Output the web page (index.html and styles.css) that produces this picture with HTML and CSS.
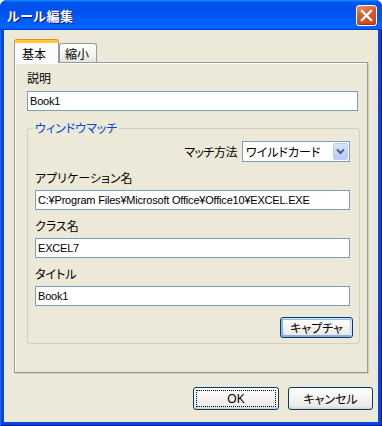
FILE: index.html
```html
<!DOCTYPE html>
<html lang="ja">
<head>
    <meta charset="UTF-8">
    <meta name="viewport" content="width=device-width, initial-scale=1.0">
    <title>ルール編集</title>
    <link rel="stylesheet" href="styles.css">
</head>
<body>
    <div class="window">
        <!-- Title bar -->
        <div class="titlebar">
            <span class="title">ルール編集</span>
            <button class="close-btn" aria-label="閉じる">
                <svg width="13" height="13" viewBox="0 0 13 13">
                    <path d="M2 2 L11 11 M11 2 L2 11" stroke="#fff" stroke-width="2.4" stroke-linecap="square"/>
                </svg>
            </button>
        </div>

        <div class="client">
            <!-- Tabs -->
            <div class="tabs">
                <div class="tab active">基本</div>
                <div class="tab">縮小</div>
            </div>

            <div class="panel">
                <div class="label">説明</div>
                <div class="input">Book1</div>

                <fieldset class="group">
                    <legend>ウィンドウマッチ</legend>

                    <div class="match-row">
                        <span class="label-inline">マッチ方法</span>
                        <div class="combo">
                            <span>ワイルドカード</span>
                            <span class="combo-btn">
                                <svg width="9" height="7" viewBox="0 0 9 7">
                                    <path d="M1 1.5 L4.5 5 L8 1.5" fill="none" stroke="#4d6185" stroke-width="2"/>
                                </svg>
                            </span>
                        </div>
                    </div>

                    <div class="label">アプリケーション名</div>
                    <div class="input">C:¥Program Files¥Microsoft Office¥Office10¥EXCEL.EXE</div>

                    <div class="label">クラス名</div>
                    <div class="input">EXCEL7</div>

                    <div class="label">タイトル</div>
                    <div class="input">Book1</div>

                    <div class="capture-row">
                        <button class="btn btn-hot">キャプチャ</button>
                    </div>
                </fieldset>
            </div>

            <!-- Dialog buttons -->
            <div class="actions">
                <button class="btn btn-ok"><span class="focus">OK</span></button>
                <button class="btn btn-cancel">キャンセル</button>
            </div>
        </div>
    </div>
</body>
</html>
```

FILE: styles.css
```css
/* General Styles */

body {
    margin: 0;
    background: #fff;
    font-family: "Liberation Sans", "Noto Sans CJK JP", sans-serif;
    font-size: 12px;
    color: #000;
    font-feature-settings: "palt";
}

.window {
    width: 382px;
    height: 426px;
    display: flex;
    flex-direction: column;
    background: #0846dc;
    border-radius: 7px 7px 0 0;
    overflow: hidden;
    box-shadow: inset 1px 0 #166aee, inset -1px 0 #00138c, inset 0 -1px #00138c;
}

/* Title bar */
.titlebar {
    height: 30px;
    flex-shrink: 0;
    display: flex;
    align-items: center;
    justify-content: space-between;
    padding: 0 5px 0 7px;
    background: linear-gradient(180deg, #0997ff, #0053ee 8%, #0050ee 40%, #0066ff 88%, #0066ff 93%, #005bff 95%, #003dd7 96%, #003dd7);
}

.title {
    color: #fff;
    font-family: "Noto Sans CJK JP", sans-serif;
    font-weight: bold;
    font-size: 13px;
    letter-spacing: 0.5px;
    text-shadow: 1px 1px #0f1089;
}

.close-btn {
    width: 21px;
    height: 21px;
    padding: 0;
    display: flex;
    align-items: center;
    justify-content: center;
    border: 1px solid #fff;
    border-radius: 3px;
    background: linear-gradient(160deg, #e9906c, #d9572d 45%, #c7441b);
    box-shadow: inset 0 -1px 1px #a12f0c;
}

/* Client area */
.client {
    flex: 1;
    margin: 0 4px 4px;
    background: #ece9d8;
    display: flex;
    flex-direction: column;
}

.tabs {
    display: flex;
    align-items: flex-end;
    margin: 10px 0 0 10px;
    height: 22px;
}

.tab {
    height: 19px;
    box-sizing: border-box;
    padding: 3px 7px 0 5px;
    border: 1px solid #919b9c;
    border-bottom: none;
    border-radius: 3px 3px 0 0;
    background: linear-gradient(#fff, #f3f3ef 60%, #e6e4dc);
    font-family: "Noto Sans CJK JP", sans-serif;
    line-height: 14px;
}

.tab.active {
    height: 23px;
    margin-bottom: -1px;
    padding: 4px 12px 0 7px;
    position: relative;
    z-index: 1;
    border-top: 3px solid #ffc73c;
    box-shadow: 0 -1px #e68b2c;
    background: #fcfcfe;
}

.panel {
    height: 311px;
    box-sizing: border-box;
    margin: 0 10px 0 10px;
    padding: 8px 9px 0 12px;
    border: 1px solid #919b9c;
    box-shadow: inset 1px 1px #fcfcfe, 1px 1px #d0cebf;
    background: #ece9d8;
}

.label {
    font-family: "Noto Sans CJK JP", sans-serif;
    line-height: 14px;
    height: 14px;
}

.input {
    height: 20px;
    box-sizing: border-box;
    margin-top: 6px;
    padding: 0 2px;
    border: 1px solid #7f9db9;
    background: #fff;
    font-size: 11px;
    letter-spacing: -0.2px;
    line-height: 18px;
    white-space: nowrap;
    overflow: hidden;
}

/* Group box */
.group {
    margin: 11px -2px 0 0;
    padding: 7px 9px 5px 7px;
    border: 1px solid #d0d0bf;
    border-radius: 3px;
}

.group legend {
    margin-left: -2px;
    padding: 0 2px;
    color: #0046d5;
    font-family: "Noto Sans CJK JP", sans-serif;
    line-height: 12px;
}

.group .label {
    margin-top: 9px;
}

.group .input {
    margin-top: 5px;
}

.match-row {
    display: flex;
    justify-content: flex-end;
    align-items: center;
    gap: 5px;
}

.label-inline {
    font-family: "Noto Sans CJK JP", sans-serif;
    letter-spacing: -0.5px;
}

.combo {
    width: 108px;
    height: 21px;
    box-sizing: border-box;
    display: flex;
    align-items: center;
    justify-content: space-between;
    padding: 0 1px 0 3px;
    border: 1px solid #7f9db9;
    background: #fff;
    font-family: "Noto Sans CJK JP", sans-serif;
}

.combo-btn {
    width: 15px;
    height: 17px;
    box-sizing: border-box;
    display: flex;
    align-items: center;
    justify-content: center;
    border: 1px solid #b9cdf7;
    border-radius: 2px;
    background: linear-gradient(#d6e3fd, #b7cbf8);
}

.capture-row {
    display: flex;
    justify-content: flex-end;
    margin: 11px -3px 0 0;
}

/* Buttons */
.btn {
    height: 23px;
    box-sizing: border-box;
    padding: 0;
    border: 1px solid #003c74;
    border-radius: 3px;
    background: linear-gradient(180deg, #fff, #ecebe6 86%, #d6d0c5);
    font-family: "Liberation Sans", "Noto Sans CJK JP", sans-serif;
    font-size: 12px;
    color: #000;
    font-feature-settings: "palt";
}

.btn-hot {
    width: 73px;
    height: 21px;
    box-shadow: inset -1px 1px #cee7ff, inset 1px 2px #98b8ea, inset -2px 2px #bcd4f6, inset 1px -1px #89ade4, inset 2px -2px #89ade4;
}

.actions {
    display: flex;
    justify-content: flex-end;
    gap: 9px;
    margin: 14px 5px 0 0;
}

.btn-ok {
    width: 86px;
    padding: 2px;
}

.focus {
    display: flex;
    align-items: center;
    justify-content: center;
    height: 100%;
    border: 1px dotted #000;
    box-sizing: border-box;
}

.btn-cancel {
    width: 85px;
}
```
